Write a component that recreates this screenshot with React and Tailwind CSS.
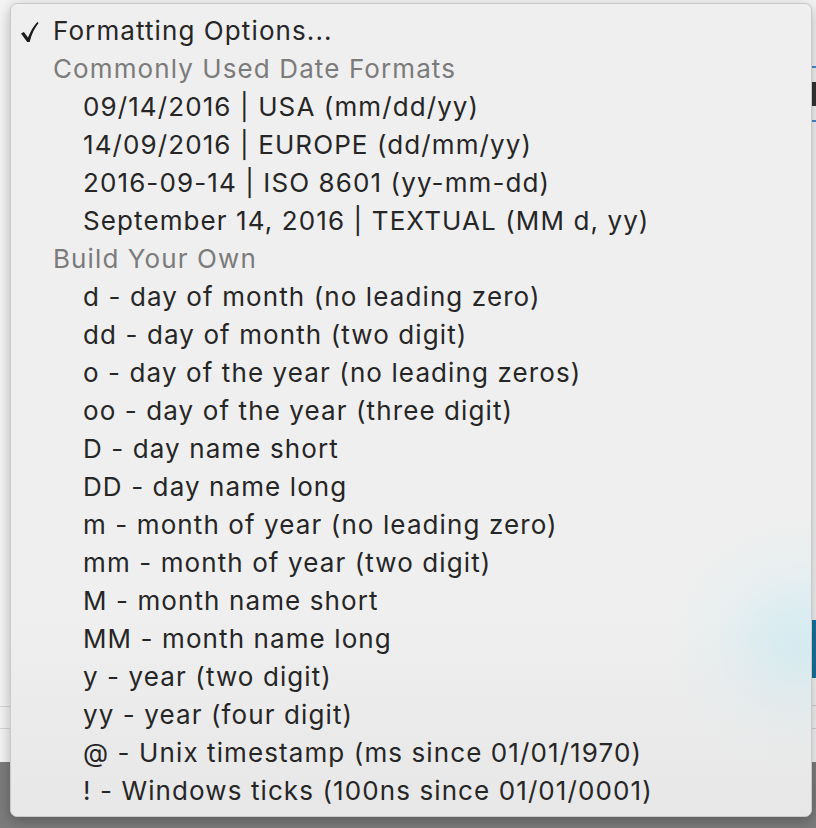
import React from "react";

const groups = [
  { type: "check", text: "Formatting Options..." },
  { type: "header", text: "Commonly Used Date Formats" },
  { type: "item", text: "09/14/2016 | USA (mm/dd/yy)" },
  { type: "item", text: "14/09/2016 | EUROPE (dd/mm/yy)" },
  { type: "item", text: "2016-09-14 | ISO 8601 (yy-mm-dd)" },
  { type: "item", text: "September 14, 2016 | TEXTUAL (MM d, yy)" },
  { type: "header", text: "Build Your Own" },
  { type: "item", text: "d - day of month (no leading zero)" },
  { type: "item", text: "dd - day of month (two digit)" },
  { type: "item", text: "o - day of the year (no leading zeros)" },
  { type: "item", text: "oo - day of the year (three digit)" },
  { type: "item", text: "D - day name short" },
  { type: "item", text: "DD - day name long" },
  { type: "item", text: "m - month of year (no leading zero)" },
  { type: "item", text: "mm - month of year (two digit)" },
  { type: "item", text: "M - month name short" },
  { type: "item", text: "MM - month name long" },
  { type: "item", text: "y - year (two digit)" },
  { type: "item", text: "yy - year (four digit)" },
  { type: "item", text: "@ - Unix timestamp (ms since 01/01/1970)" },
  { type: "item", text: "! - Windows ticks (100ns since 01/01/0001)" },
];

function Check() {
  return (
    <svg width="18" height="20" viewBox="0 0 18 20" className="shrink-0">
      <path
        d="M0 11.6 L2.9 10 L7 15.6 C9.6 9 12.6 4 16.3 0 L17.6 1.1 C13.7 6 10.6 12 8.7 20 L6.2 20 Z"
        fill="#1c1c1c"
      />
    </svg>
  );
}

export default function App() {
  return (
    <div className="relative w-[816px] h-[828px] overflow-hidden font-['Inter',sans-serif]">
      {/* page behind the menu */}
      <div className="flex flex-col h-full">
        <div className="flex-1 flex justify-between bg-[#f4f4f4]">
          <div className="w-[10px] flex flex-col pt-[706px] gap-[21px]">
            <div className="h-px bg-[#d6d6d6]" />
            <div className="h-px bg-[#d6d6d6]" />
          </div>
          <div className="w-[4px] flex flex-col pt-[66px]">
            <div className="h-[2px] bg-[#4a8bd0]" />
            <div className="h-[14px]" />
            <div className="h-[24px] bg-[#333]" />
            <div className="h-[14px]" />
            <div className="h-[2px] bg-[#4a8bd0]" />
            <div className="h-[498px]" />
            <div className="h-[58px] bg-[#17729d]" />
            <div className="h-[27px]" />
            <div className="h-px bg-[#d0d0d0]" />
            <div className="h-[22px]" />
            <div className="h-px bg-[#d0d0d0]" />
          </div>
        </div>
        <div className="h-[66px] bg-[#7c7c7c]" />
      </div>

      {/* menu overlay */}
      <div className="absolute left-[10px] top-[3px] w-[802px] h-[814px] rounded-[7px] border border-[#c9c9c9] bg-[#efefef] shadow-[0_4px_14px_rgba(0,0,0,0.28)] overflow-hidden">
        <div className="absolute inset-0 bg-[radial-gradient(circle_at_790px_648px,rgba(208,236,242,1)_0px,rgba(214,236,241,0.8)_40px,rgba(225,238,241,0.45)_85px,rgba(239,239,239,0)_135px)]" />
        <div className="absolute inset-0 bg-gradient-to-b from-transparent from-75% to-[#e7e7e7]" />
        <div className="relative flex flex-col pt-[8px] text-[26px] leading-none tracking-[1.1px] whitespace-nowrap">
          {groups.map((g, i) => (
            <div key={i} className="flex items-center h-[38px]">
              {g.type === "check" && (
                <div className="flex items-center">
                  <div className="w-[42px] pl-[10px] pt-[1px] flex items-center">
                    <Check />
                  </div>
                  <span className="text-[#262626]">{g.text}</span>
                </div>
              )}
              {g.type === "header" && <span className="pl-[42px] text-[#7b7b7b]">{g.text}</span>}
              {g.type === "item" && <span className="pl-[72px] text-[#262626]">{g.text}</span>}
            </div>
          ))}
        </div>
      </div>
    </div>
  );
}
